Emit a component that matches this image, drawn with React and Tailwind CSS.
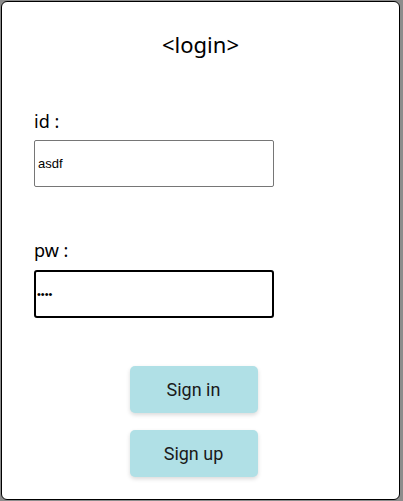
import React from "react";

function Field({ label, type, value, focused }) {
  return (
    <div className="flex flex-col">
      <label className="text-[18px] leading-[24px] text-black">{label}</label>
      <input
        type={type}
        defaultValue={value}
        readOnly
        autoFocus={focused}
        className={
          focused
            ? "mt-[8px] h-[48px] w-[240px] rounded-[3px] border-2 border-black bg-white px-[1px] text-[11px] text-black outline-none font-['Liberation_Sans',Arial,sans-serif]"
            : "mt-[7px] h-[47px] w-[240px] rounded-[2px] border border-[#767676] bg-white px-[3px] text-[13px] text-black outline-none font-['Liberation_Sans',Arial,sans-serif]"
        }
      />
    </div>
  );
}

export default function App() {
  return (
    <div className="h-[501px] w-[403px] bg-[#8c8c8c] pt-px pl-px pr-[3px] pb-px font-['Noto_Sans',sans-serif]">
      <div className="flex h-full flex-col rounded-md border border-black bg-white">
        <h1 className="mt-[27px] text-center text-[22px] leading-[30px] text-black">&lt;login&gt;</h1>

        <div className="mt-[50px] flex flex-col gap-[51px] pl-[32px]">
          <Field label="id :" type="text" value="asdf" />
          <Field label="pw :" type="password" value="asdf" focused />
        </div>

        <div className="mt-[48px] flex flex-col items-center gap-[17px] pr-[14px] font-['Roboto',sans-serif]">
          <button className="h-[47px] w-[128px] rounded-[5px] bg-[#b0e0e6] text-[18px] text-[#1a1a1a] shadow-[0_2px_4px_rgba(0,0,0,0.15)]">
            Sign in
          </button>
          <button className="h-[47px] w-[128px] rounded-[5px] bg-[#b0e0e6] text-[18px] text-[#1a1a1a] shadow-[0_2px_4px_rgba(0,0,0,0.15)]">
            Sign up
          </button>
        </div>
      </div>
    </div>
  );
}
